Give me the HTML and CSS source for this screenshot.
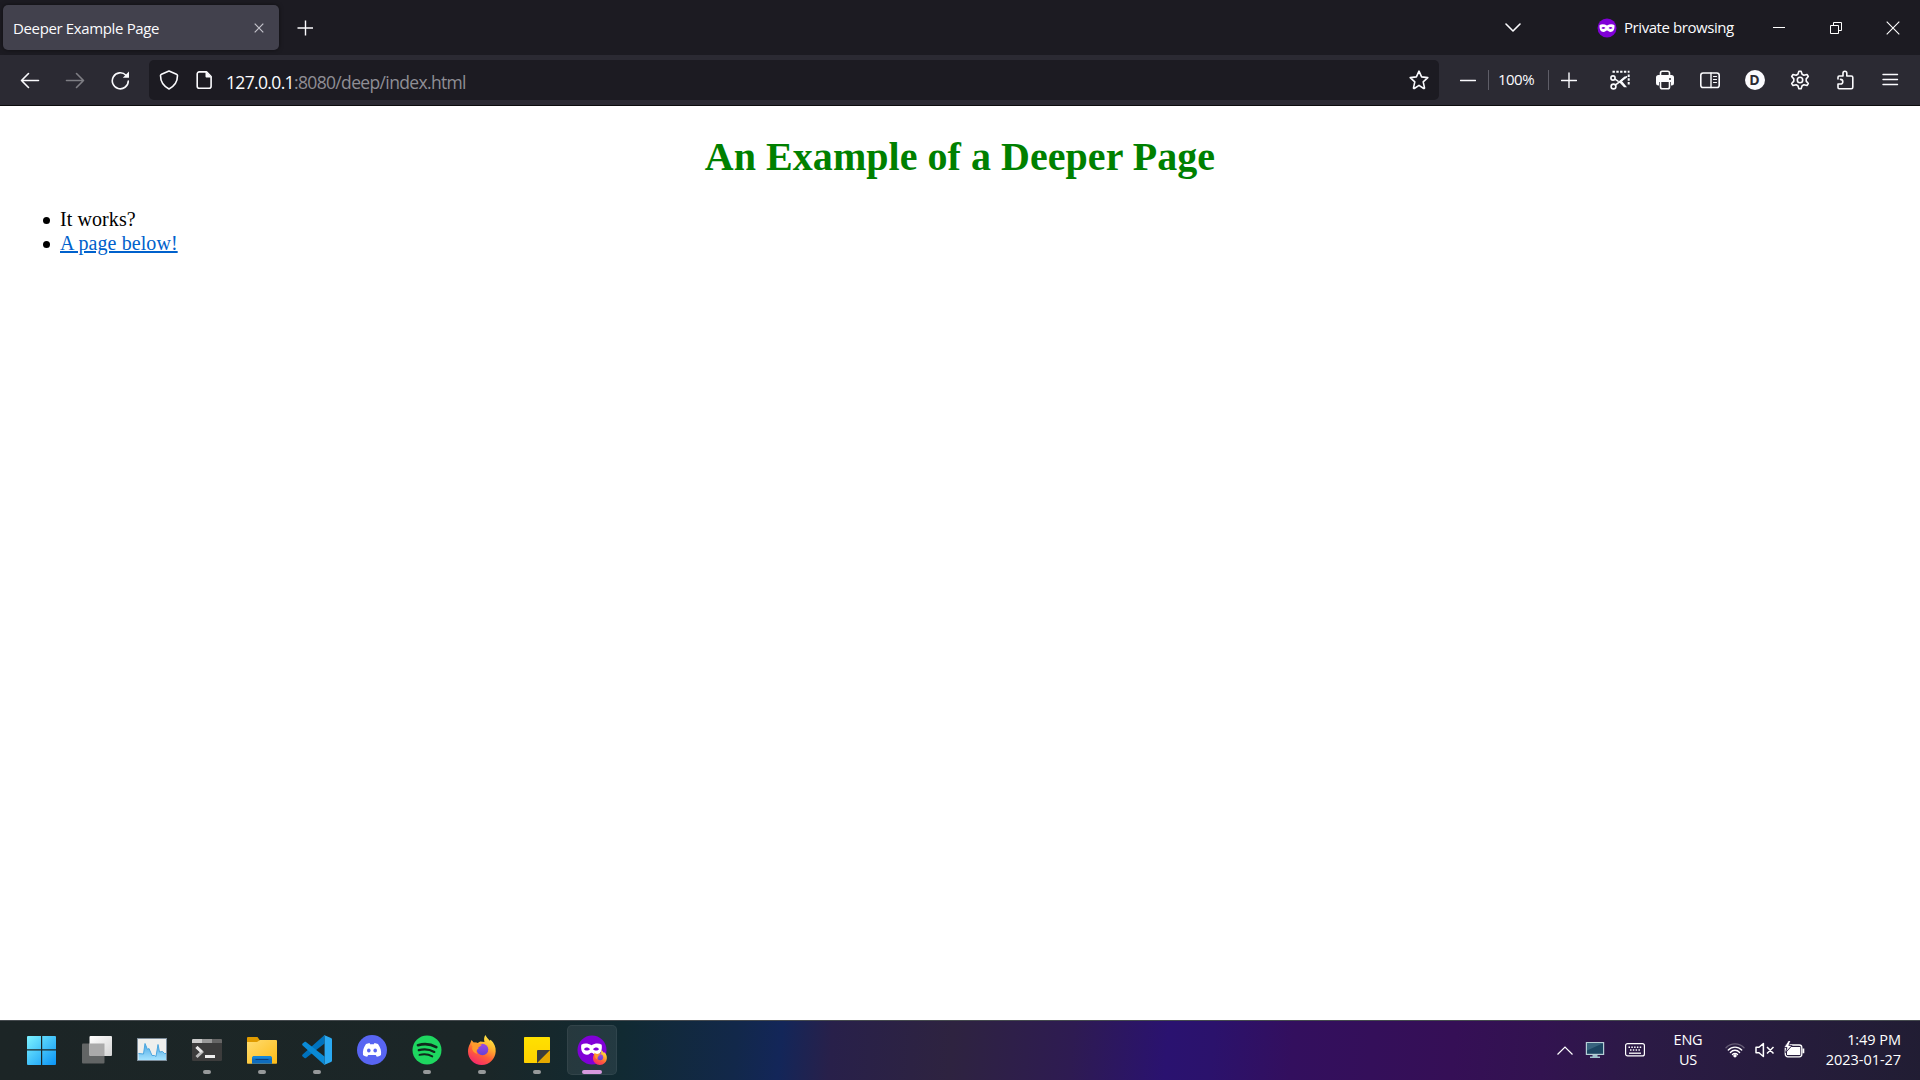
FILE: index.html
```html
<!DOCTYPE html>
<html lang="en">
<head>
<meta charset="utf-8">
<title>Deeper Example Page</title>
<link rel="stylesheet" href="styles.css">
</head>
<body>
<div class="screen">
  <header class="tabbar">
    <div class="tab">
      <span class="tab-title">Deeper Example Page</span>
      <svg class="tab-close" width="10" height="10" viewBox="0 0 10 10"><path d="M.7.7l8.6 8.6M9.300.7L.7 9.300" fill="none" stroke="#c4c3cb" stroke-width="1.200"/></svg>
    </div>
    <svg class="new-tab" width="16" height="16" viewBox="0 0 16 16"><path d="M8.500 .5v15M.5 8h15.500" fill="none" stroke="#fbfbfe" stroke-width="1.400"/></svg>
    <div class="tabbar-right">
      <svg class="all-tabs" width="16" height="10" viewBox="0 0 16 10"><path d="M1 1l7 7 7-7" fill="none" stroke="#fbfbfe" stroke-width="1.600" stroke-linecap="round" stroke-linejoin="round"/></svg>
      <div class="private">
        <svg width="20" height="20" viewBox="0 0 20 20"><circle cx="10" cy="10" r="9.500" fill="#8000d7"/><path fill="#fff" fill-rule="evenodd" d="M2.500 7.300c1.800-1.500 5-1.300 7.500.2 2.500-1.500 5.700-1.700 7.500-.2.300 4.200-1.300 6.700-4 6.700-1.700 0-2.300-1.400-3.500-1.400S8.200 14 6.500 14c-2.700 0-4.300-2.500-4-6.700zM4.500 10c.5 1.100 3 1.300 4 .1-1-1.500-3.200-1.500-4-.1zm7 .1c1 1.200 3.500 1 4-.1-.8-1.400-3-1.400-4 .1z"/></svg>
        <span>Private browsing</span>
      </div>
      <div class="win-buttons">
        <span class="win"><svg width="12" height="12" viewBox="0 0 12 12"><path d="M0 5.500h12" stroke="#fff"/></svg></span>
        <span class="win"><svg width="12" height="12" viewBox="0 0 12 12"><path d="M.5 3.500h8v8h-8zM3.500 3.500v-3h8v8h-3" fill="none" stroke="#fff"/></svg></span>
        <span class="win"><svg width="14" height="14" viewBox="0 0 14 14"><path d="M.7.7l12.600 12.600M13.300.7L.7 13.300" stroke="#fff" stroke-width="1.100"/></svg></span>
      </div>
    </div>
  </header>

  <nav class="toolbar">
    <span class="tool"><svg width="20" height="20" viewBox="0 0 20 20"><path d="M18.500 10.500h-17M8.500 3.500l-7 7 7 7"/></svg></span>
    <span class="tool disabled"><svg width="20" height="20" viewBox="0 0 20 20"><path d="M1.500 10.500h17M11.500 3.500l7 7-7 7"/></svg></span>
    <span class="tool"><svg width="20" height="20" viewBox="0 0 20 20"><path d="M16 5.200A8 8 0 1 0 18.300 11"/><path class="solid" d="M19 1.500v6.200h-6.200z"/></svg></span>
    <div class="urlbar">
      <svg class="shield" width="20" height="20" viewBox="0 0 20 20"><path d="M10 1L2.500 4.200c-.6.300-1 .7-1 1.400 0 6 3 10.600 8.500 13.400 5.500-2.800 8.500-7.400 8.500-13.400 0-.7-.4-1.100-1-1.400z"/></svg>
      <svg class="page-icon" width="16" height="20" viewBox="0 0 16 20"><path d="M3.200 1.900h7.300l4.600 4.600v9.800a2 2 0 0 1-2 2H3.200a2 2 0 0 1-2-2V3.900a2 2 0 0 1 2-2z"/><path class="solid" d="M9.500 1.500l6 6h-4.700c-.8 0-1.300-.5-1.300-1.300z"/></svg>
      <span class="url"><b>127.0.0.1</b>:8080/deep/index.html</span>
      <svg class="star" width="20" height="20" viewBox="0 0 20 20"><path d="M10 1.200l2.600 5.700 6.200.7-4.600 4.200 1.300 6.100c.1.500-.3.800-.8.600L10 15.400l-4.700 3.100c-.5.200-.9-.1-.8-.6l1.300-6.100-4.600-4.200 6.200-.7z"/></svg>
    </div>
    <div class="zoom">
      <span class="zoom-btn"><svg width="16" height="16" viewBox="0 0 16 16"><path d="M.5 8.500h15"/></svg></span>
      <span class="zoom-level">100%</span>
      <span class="zoom-btn"><svg width="16" height="16" viewBox="0 0 16 16"><path d="M.5 8.500h15M8 1v15"/></svg></span>
    </div>
    <span class="tool"><svg width="20" height="20" viewBox="0 0 20 20"><path class="dashes" d="M2.500 1.700H19.500M18.700 4.500V16"/><circle cx="3" cy="8" r="2.100"/><circle cx="3.500" cy="16.500" r="2.400"/><path stroke-width="1.500" d="M5 9.200l3 2M5.500 14.900L16.500 6.800"/><path class="solid" d="M7.500 12.500L14.500 6.500l2.500.3-6.500 6zM9.500 12.500l2.200-1.700 5.300 6.400h-3z"/></svg></span>
    <span class="tool"><svg width="20" height="20" viewBox="0 0 20 20"><path d="M5.500 6V3a1.800 1.800 0 0 1 1.800-1.800h5.400A1.800 1.800 0 0 1 14.500 3v3"/><path class="solid" d="M3.500 5h13A2.500 2.500 0 0 1 19 7.500V13a2.500 2.500 0 0 1-2.500 2.500H16V12H4v3.500h-.5A2.500 2.500 0 0 1 1 13V7.500A2.500 2.500 0 0 1 3.500 5z"/><path d="M5.500 12v5a1.800 1.800 0 0 0 1.800 1.800h5.400a1.800 1.800 0 0 0 1.800-1.800v-5"/><circle cx="15" cy="9" r="1" fill="#2b2a33" stroke="none"/></svg></span>
    <span class="tool"><svg width="20" height="20" viewBox="0 0 20 20"><rect x=".8" y="3" width="18.400" height="14.500" rx="2.300"/><path d="M11 3v14.500" stroke-width="1.400"/><path d="M13.500 6.500h3M13.500 9.500h3M13.500 12.500h3" stroke-width="1.200"/></svg></span>
    <span class="tool"><span class="account">D</span></span>
    <span class="tool"><svg width="20" height="20" viewBox="0 0 20 20"><circle cx="10" cy="10" r="2.700"/><path d="M8.900 1.200h2.200l1 3 1.800 1 3.100-.7 1.300 2-2.100 2.400v2.200l2.100 2.400-1.300 2-3.100-.7-1.800 1-1 3H8.900l-1-3-1.800-1-3.100.7-1.300-2 2.100-2.400V8.900L1.700 6.500l1.300-2 3.100.7 1.800-1z"/></svg></span>
    <span class="tool"><svg width="20" height="20" viewBox="0 0 20 20"><path d="M3 9V7.200a1.200 1.200 0 0 1 1.200-1.200H8V3.200a1.900 1.900 0 0 1 3.800 0V6h4.500a1.500 1.500 0 0 1 1.500 1.500v9.800a1.500 1.500 0 0 1-1.500 1.500H4.200A1.200 1.200 0 0 1 3 17.600V14h2.500a2.300 2.300 0 0 0 0-4.600"/></svg></span>
    <span class="tool"><svg width="20" height="20" viewBox="0 0 20 20"><path d="M3 4.500h14.500M3 9.500h14.500M3 14.500h14.500" stroke-width="1.400"/></svg></span>
  </nav>

  <main class="page">
    <h1>An Example of a Deeper Page</h1>
    <ul>
      <li>It works?</li>
      <li><a href="#">A page below!</a></li>
    </ul>
  </main>

  <footer class="taskbar">
    <svg width="0" height="0" class="defs">
      <defs>
        <linearGradient id="win" x1="0" y1="0" x2="1" y2="1"><stop offset="0" stop-color="#7df3ff"/><stop offset="1" stop-color="#0a93f5"/></linearGradient>
        <linearGradient id="pane" x1="0" y1="0" x2="1" y2="1"><stop offset="0" stop-color="#fff"/><stop offset="1" stop-color="#d4d4d4"/></linearGradient>
        <linearGradient id="chart" x1="0" y1="0" x2="0" y2="1"><stop offset="0" stop-color="#49a5e3"/><stop offset="1" stop-color="#a5e3ff"/></linearGradient>
        <linearGradient id="folder" x1="0" y1="0" x2="1" y2="1"><stop offset="0" stop-color="#ffdc70"/><stop offset="1" stop-color="#fdbb16"/></linearGradient>
        <linearGradient id="fox" x1=".8" y1="0" x2=".3" y2="1"><stop offset="0" stop-color="#fff04a"/><stop offset=".35" stop-color="#ffb52e"/><stop offset=".65" stop-color="#ff6038"/><stop offset="1" stop-color="#f5266e"/></linearGradient>
        <linearGradient id="note" x1="0" y1="0" x2="0" y2="1"><stop offset="0" stop-color="#ffe100"/><stop offset="1" stop-color="#ffd000"/></linearGradient>
        <linearGradient id="globe" x1="0" y1="0" x2="0" y2="1"><stop offset="0" stop-color="#a04ae0"/><stop offset="1" stop-color="#6540d8"/></linearGradient>
        <symbol id="firefox" viewBox="0 0 30 30">
          <path fill="url(#fox)" d="M18.500 0c1 2.500 3 4 4.300 5.700l.8-1C27.300 8 29 12 28.700 16.500 28.300 24 22.300 30 14.800 30 7 30 1 24 1 16.500c0-3 .8-5.600 2.200-8L4.500 5l2.200 2.600c1.300-.3 2.600-.2 4 .3l2.600-1.500L17.500 7c-.8-2.500-.5-5 1-7z"/>
          <circle cx="15.500" cy="14.500" r="5.800" fill="url(#globe)"/>
          <path fill="#ff9a2c" d="M4 8.500c2.700-1.300 5.700-.7 8 .8l2.800.3c-.6 1.700-2.400 2-3.300 2.500l-.2 2C9 14.800 9 17 10.500 18.700c-4-.5-6.200-4-5-7.200z"/>
        </symbol>
      </defs>
    </svg>
    <div class="apps">
      <span class="app"><svg width="30" height="30" viewBox="0 0 30 30"><path fill="url(#win)" d="M1 1h13v13.200H0V2a1 1 0 0 1 1-1zM15.200 1H28a1 1 0 0 1 1 1v12.200H15.200zM0 15.600h14V30H1a1 1 0 0 1-1-1zM15.200 15.600H29V29a1 1 0 0 1-1 1H15.200z"/></svg></span>
      <span class="app"><svg width="30" height="30" viewBox="0 0 30 30"><rect y="8.500" width="22.500" height="20" rx="1" fill="#626565"/><rect x="7.500" y="1" width="22.500" height="20" rx="1" fill="url(#pane)"/><path fill="#aaa" d="M7.500 8.500h15V21h-14a1 1 0 0 1-1-1z"/></svg></span>
      <span class="app"><svg width="30" height="30" viewBox="0 0 30 30"><rect x=".5" y="3.500" width="29" height="22" fill="#efefed" stroke="#7d8d9b"/><path fill="url(#chart)" d="M1.500 18.500l5 .5L8 8.500l2.500 6 1.500-1 3 7h2.500l1.500 1 2-12 1.500 7.500 3-.5 2 2H29V25H1.500z"/><path fill="none" stroke="#4ba6df" d="M1.500 18.500l5 .5L8 8.500l2.500 6 1.500-1 3 7h2.500l1.500 1 2-12 1.500 7.500 3-.5 2 2H29"/></svg></span>
      <span class="app running"><svg width="30" height="30" viewBox="0 0 30 30"><rect y="4" width="30" height="22" rx="1.200" fill="#3c3c3c"/><path fill="#ccc" d="M1.200 4H10v4H0V5.200A1.200 1.200 0 0 1 1.200 4z"/><path fill="#999" d="M10 4h10v4H10z"/><path fill="#666" d="M20 4h8.800A1.200 1.200 0 0 1 30 5.200V8H20z"/><path fill="none" stroke="#bbb" stroke-width="3" d="M4.500 12l5.300 5-5.300 5"/><path fill="none" stroke="#e8e8e8" stroke-width="3" d="M4.500 12l5.300 5"/><path fill="#eee" d="M13 20h10v3H13z"/></svg></span>
      <span class="app running"><svg width="30" height="30" viewBox="0 0 30 30"><path fill="#e09b00" d="M1 2h9.500l2.500 3.500V11H0V3a1 1 0 0 1 1-1z"/><path fill="url(#folder)" d="M0 7h10l3-2h16a1 1 0 0 1 1 1v22a.8.8 0 0 1-.8.8H.8A.8.8 0 0 1 0 28z"/><path fill="#0f6cbd" d="M5 28.800v-5.300a2.500 2.500 0 0 1 2.500-2.500h15a2.500 2.500 0 0 1 2.500 2.500v5.300z"/><path fill="#1486d8" d="M7.500 21h15a2.500 2.500 0 0 1 2.500 2.500H5A2.500 2.500 0 0 1 7.500 21z"/><path stroke="#0a3f7c" d="M8.500 24.500h13"/></svg></span>
      <span class="app running"><svg width="30" height="30" viewBox="0 0 30 30"><path fill="#0072bd" d="M22.500 0v8.500L4 23c-.5.400-1 .4-1.500 0L.6 21.400c-.6-.5-.6-1.200 0-1.800z"/><path fill="#0a8ad6" d="M22.500 30v-8.500L4 7c-.5-.4-1-.4-1.500 0L.6 8.600c-.6.500-.6 1.200 0 1.800z"/><path fill="#2aa9f2" d="M22 0l7 3c.6.300 1 .8 1 1.500v21c0 .7-.4 1.200-1 1.500l-7 3c.4-.4.600-.9.600-1.500v-27c0-.6-.2-1.100-.6-1.500z"/></svg></span>
      <span class="app"><svg width="30" height="30" viewBox="0 0 30 30"><circle cx="15" cy="15" r="15" fill="#5865f2"/><path fill="#fff" d="M9 9l3.500-1 .7 1.300h3.600l.7-1.300L21 9c2.500 3.500 3.500 7 3 11-1.500 1-2.700 1.500-4.200 1.800l-1-1.700h-7.600l-1 1.700C8.700 21.500 7.500 21 6 20c-.5-4 .5-7.500 3-11z"/><ellipse cx="11.800" cy="15.500" rx="1.800" ry="2" fill="#5865f2"/><ellipse cx="18.200" cy="15.500" rx="1.800" ry="2" fill="#5865f2"/></svg></span>
      <span class="app running"><svg width="30" height="30" viewBox="0 0 30 30"><circle cx="15" cy="15" r="14.500" fill="#1ed760"/><path fill="none" stroke="#10281c" stroke-linecap="round" stroke-width="2.700" d="M6 10.200c6.300-1.700 12.700-1.200 18.300 1.900"/><path fill="none" stroke="#10281c" stroke-linecap="round" stroke-width="2.300" d="M6.800 15.200c5.500-1.500 10.600-1 15.500 1.700"/><path fill="none" stroke="#10281c" stroke-linecap="round" stroke-width="1.900" d="M7.500 19.900c4.600-1.200 8.800-.8 12.800 1.500"/></svg></span>
      <span class="app running"><svg width="30" height="30"><use href="#firefox"/></svg></span>
      <span class="app running"><svg width="30" height="30" viewBox="0 0 30 30"><path fill="url(#note)" d="M2.800 2h24.400a.8.800 0 0 1 .8.800V15L15 28H2.800a.8.800 0 0 1-.8-.8V2.800a.8.800 0 0 1 .8-.8z"/><path fill="#e6a800" d="M15 28l13-13v12a1 1 0 0 1-1 1z"/><path fill="#3c3c3c" d="M15 28V16a1 1 0 0 1 1-1h12z"/></svg></span>
      <span class="app running active"><svg width="30" height="30" viewBox="0 0 30 30"><circle cx="15" cy="15" r="14.500" fill="#8000d7"/><path fill="#fff" fill-rule="evenodd" d="M4.300 9.700c3-1.800 7-1.400 10.200.6 3.200-2 7.200-2.400 10.200-.6.900 6.300-1.700 10-5.700 10-2.400 0-3-2-4.500-2s-2.100 2-4.500 2c-4 0-6.600-3.700-5.700-10zM7 14c.8 1.800 4.300 2.200 6 .2-1.500-2.300-4.900-2.300-6-.2zm9 .2c1.700 2 5.200 1.600 6-.2-1.100-2.100-4.500-2.100-6 .2z"/><use href="#firefox" x="15.500" y="15" width="15" height="15"/></svg></span>
    </div>
    <div class="tray">
      <svg class="tray-up" width="16" height="9" viewBox="0 0 16 9"><path d="M.5 8.500L8 1l7.500 7.500" fill="none" stroke="#fff" stroke-width="1.200"/></svg>
      <svg class="tray-pc" width="20" height="18" viewBox="0 0 20 18"><path fill="#9fc1cc" d="M7.500 13h5v2.500H15V17H5v-1.500h2.500z"/><rect x=".8" y="1" width="18.400" height="13" fill="#b6ced5"/><rect x="2" y="2.200" width="16" height="10.600" fill="#1d4663"/><path fill="#38647f" d="M2 2.200h16L2 9.500z"/></svg>
      <svg class="tray-kbd" width="20" height="14" viewBox="0 0 20 14"><rect x=".6" y=".6" width="18.800" height="12.300" rx="2" fill="none" stroke="#fff" stroke-width="1.200"/><path d="M3.500 4.200h13M5 7h10" stroke="#fff" stroke-width="1.400" stroke-dasharray="1.500 1.300"/><path d="M4 10.200h12" stroke="#fff" stroke-width="1.300"/></svg>
      <div class="lang"><span>ENG</span><span>US</span></div>
      <svg class="tray-wifi" width="20" height="16" viewBox="0 0 20 16"><g fill="none" stroke="#fff" stroke-width="1.400" stroke-linecap="round"><path stroke="#665d75" d="M1 5.800c5-5.200 13-5.200 18 0"/><path d="M3.300 8.100c3.700-4 9.700-4 13.400 0M5.400 10.400c2.600-2.800 6.600-2.800 9.200 0"/><path d="M7.500 12.500c1.400-1.500 3.600-1.500 5 0"/></g><circle cx="10" cy="13.700" r="1.700" fill="#fff"/></svg>
      <svg class="tray-vol" width="20" height="16" viewBox="0 0 20 16"><path d="M1 5.300h3L8.400 1.500v13L4 10.800H1zM12 5l6.500 6.500M18.500 5L12 11.500" fill="none" stroke="#fff" stroke-width="1.500" stroke-linejoin="round"/></svg>
      <svg class="tray-bat" width="21" height="18" viewBox="0 0 21 18"><rect x="1.300" y="4" width="16.500" height="11.800" rx="2.500" fill="none" stroke="#fff" stroke-width="1.300"/><path fill="#fff" d="M7 6h9.300v8H3v-3.500zM18.500 7.500h1.800v4.700h-1.800z"/><path d="M4.500 -.5L0 6.500h3l-1.500 5L8 4.500H4.800L6.800 -.5z" fill="#fff" stroke="#2a1b43" stroke-width=".8"/></svg>
      <div class="clock"><span>1:49 PM</span><span>2023-01-27</span></div>
    </div>
  </footer>
</div>
</body>
</html>
```
FILE: styles.css
```css
* { box-sizing: border-box; }

body {
  margin: 0;
  background: #fff;
  font-family: "Open Sans", "Noto Sans", sans-serif;
}

svg { display: block; flex: none; }

.screen {
  display: flex;
  flex-direction: column;
  width: 1920px;
  height: 1080px;
  overflow: hidden;
}

/* Tab strip */
.tabbar {
  display: flex;
  align-items: center;
  height: 55px;
  padding-left: 3px;
  background: #1c1b22;
  color: #fbfbfe;
  font-size: 15px;
}

.tab {
  display: flex;
  align-items: center;
  justify-content: space-between;
  width: 276px;
  height: 45px;
  padding: 0 15px 0 10px;
  border-radius: 5px;
  background: #42414d;
  box-shadow: 0 0 4px rgba(0, 0, 0, .5);
}

.tab-title { letter-spacing: -.36px; }
.new-tab { margin-left: 18px; }

.tabbar-right {
  display: flex;
  align-items: center;
  margin-left: auto;
}

.all-tabs { margin-right: 76px; }

.private {
  display: flex;
  align-items: center;
  gap: 7px;
  width: 153px;
  letter-spacing: -.43px;
  white-space: nowrap;
}

.private span { margin-top: -1px; }

.win-buttons { display: flex; margin-right: -1px; }

.win {
  display: flex;
  align-items: center;
  justify-content: center;
  width: 57px;
  height: 54px;
}

/* Navigation toolbar */
.toolbar {
  display: flex;
  align-items: center;
  height: 51px;
  padding: 0 8px 0 7px;
  border-bottom: 1px solid #0c0c0d;
  background: #2b2a33;
  color: #fbfbfe;
}

.toolbar svg {
  fill: none;
  stroke: #fbfbfe;
  stroke-width: 1.600;
  stroke-linecap: round;
  stroke-linejoin: round;
}

.toolbar .solid { fill: #fbfbfe; stroke: none; }

.toolbar .dashes {
  stroke-width: 2;
  stroke-dasharray: 2.400 1.400;
  stroke-linecap: butt;
}

.tool {
  display: flex;
  align-items: center;
  justify-content: center;
  width: 45px;
  height: 50px;
}

.disabled { opacity: .4; }

.urlbar {
  display: flex;
  flex: 1;
  align-items: center;
  height: 40px;
  margin-left: 7px;
  padding: 0 10px;
  border-radius: 5px;
  background: #1c1b22;
}

.page-icon { margin-left: 17px; }

.url {
  margin-left: 14px;
  padding-top: 3px;
  color: #8f8e95;
  font-size: 17.500px;
  letter-spacing: -.65px;
}

.url b { color: #fbfbfe; font-weight: 400; }
.star { margin-left: auto; }

.zoom {
  display: flex;
  align-items: center;
  width: 158px;
  padding-left: 9px;
}

.zoom-btn {
  display: flex;
  justify-content: center;
  width: 40px;
}

.zoom .zoom-btn svg { stroke-width: 1.400; }

.zoom-level {
  width: 61px;
  height: 20px;
  padding-right: 5px;
  border: solid #5f5e68;
  border-width: 0 1px;
  font-size: 15px;
  line-height: 19px;
  text-align: center;
  letter-spacing: -.5px;
}

.account {
  width: 20px;
  height: 20px;
  border-radius: 50%;
  background: #fbfbfe;
  color: #2b2a33;
  font-size: 14px;
  font-weight: 700;
  line-height: 20px;
  text-align: center;
}

/* Web page */
.page {
  flex: 1;
  padding: 0 10px;
  color: #000;
  font: 20px/24px "Liberation Serif", "Times New Roman", serif;
}

.page h1 {
  margin: 28px 0 27px;
  color: green;
  font-size: 40px;
  line-height: 46px;
  letter-spacing: .04px;
  text-align: center;
}

.page ul {
  margin: 0;
  padding-left: 50px;
  list-style: none;
  letter-spacing: .08px;
}

.page li::before {
  display: inline-block;
  width: 7px;
  height: 7px;
  margin: 0 10px 0 -17px;
  border-radius: 50%;
  background: #000;
  vertical-align: 2.500px;
  content: "";
}

.page a { color: #0061cc; }

/* Taskbar */
.taskbar {
  display: flex;
  justify-content: space-between;
  height: 60px;
  border-top: 1px solid #454a4e;
  background: linear-gradient(95deg, #1c2526 0, #1b2627 480px, #112a32 620px, #12284a 735px, #132659 780px, #28204a 830px, #2e2340 950px, #2e1b52 1070px, #2a1270 1165px, #2b126c 1210px, #330f5e 1290px, #350f56 1450px, #321350 1540px, #2b1a45 1640px, #261c3c 1780px, #211d33 1920px);
  color: #fff;
}

.defs { position: absolute; }

.apps { display: flex; gap: 5px; padding: 4px 0 0 17px; }

.app {
  display: flex;
  flex-direction: column;
  align-items: center;
  width: 50px;
  height: 50px;
  padding-top: 10px;
  border-radius: 5px;
}

.running::after {
  width: 8px;
  height: 4px;
  margin-top: 5px;
  border-radius: 2px;
  background: #96999a;
  content: "";
}

.active {
  background: rgba(255, 255, 255, .08);
  box-shadow: inset 0 0 0 1px rgba(255, 255, 255, .06);
}

.active::after { width: 20px; background: #d799de; }

.tray {
  display: flex;
  align-items: center;
  padding: 0 19px 1px 0;
  font-size: 14.500px;
  line-height: 20px;
}

.tray-pc { margin-left: 12px; }
.tray-kbd { margin-left: 20px; }

.lang {
  display: flex;
  flex-direction: column;
  width: 50px;
  margin-left: 18px;
  text-align: center;
  letter-spacing: -.2px;
}

.tray-wifi { margin-left: 12px; }
.tray-vol { margin-left: 10px; }
.tray-bat { margin-left: 9px; }

.clock {
  display: flex;
  flex-direction: column;
  width: 96px;
  text-align: right;
  letter-spacing: -.05px;
}
```
